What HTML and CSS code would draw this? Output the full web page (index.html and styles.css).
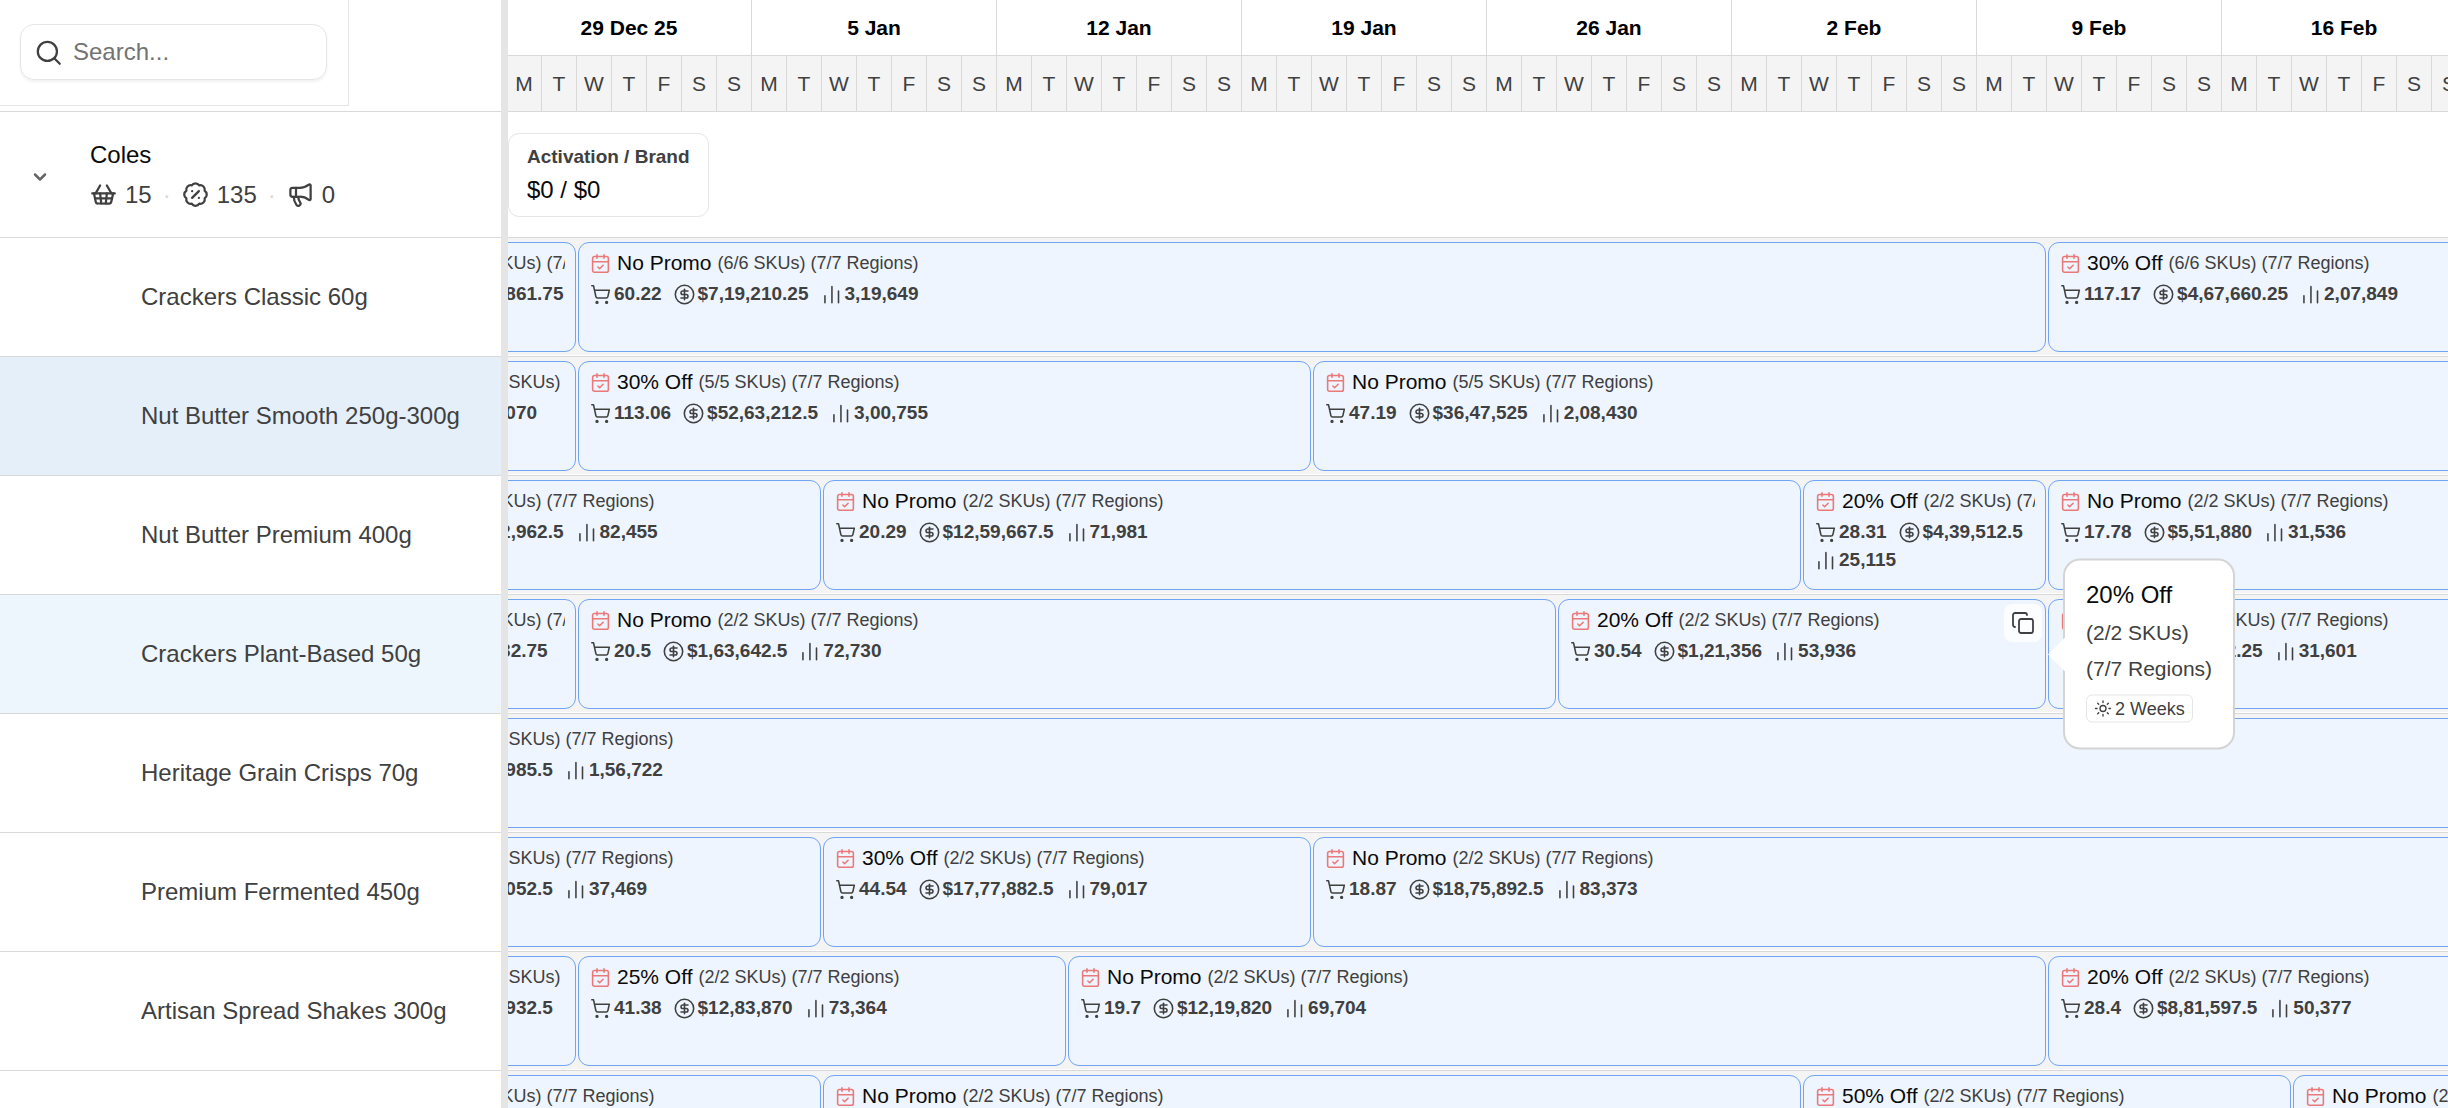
FILE: index.html
```html
<!DOCTYPE html>
<html lang="en">
<head>
    <meta charset="UTF-8">
    <meta name="viewport" content="width=device-width, initial-scale=1.0">
    <title>Promo Planner</title>
    <link rel="stylesheet" href="styles.css">
</head>
<body>

    <!-- Icon set -->
    <svg class="sprite" aria-hidden="true">
        <symbol id="search-icon" viewBox="0 0 24 24"><circle cx="11" cy="11" r="8.5"/><path d="m22 22-4.7-4.7"/></symbol>
        <symbol id="chevron" viewBox="0 0 24 24"><path d="m6 9 6 6 6-6"/></symbol>
        <symbol id="basket" viewBox="0 0 24 24"><path d="m15 11-1 9"/><path d="m19 11-4-7"/><path d="M2 11h20"/><path d="m3.5 11 1.6 7.4a2 2 0 0 0 2 1.6h9.8a2 2 0 0 0 2-1.6l1.7-7.4"/><path d="M4.5 15.5h15"/><path d="m5 11 4-7"/><path d="m9 11 1 9"/></symbol>
        <symbol id="percent" viewBox="0 0 24 24"><path d="M3.85 8.62a4 4 0 0 1 4.78-4.77 4 4 0 0 1 6.74 0 4 4 0 0 1 4.78 4.78 4 4 0 0 1 0 6.74 4 4 0 0 1-4.77 4.78 4 4 0 0 1-6.75 0 4 4 0 0 1-4.78-4.77 4 4 0 0 1 0-6.76Z"/><path d="m15 9-6 6"/><path d="M9 9h.01"/><path d="M15 15h.01"/></symbol>
        <symbol id="megaphone" viewBox="0 0 24 24"><path d="M11 6a13 13 0 0 0 8.4-2.8A1 1 0 0 1 21 4v12a1 1 0 0 1-1.6.8A13 13 0 0 0 11 14H5a2 2 0 0 1-2-2V8a2 2 0 0 1 2-2z"/><path d="M6 14a12 12 0 0 0 2.4 7.2 2 2 0 0 0 3.2-2.4A8 8 0 0 1 10 14"/><path d="M8 6v8"/></symbol>
        <symbol id="calendar" viewBox="0 0 24 24"><path d="M8 2v4"/><path d="M16 2v4"/><rect x="3" y="4" width="18" height="18" rx="2"/><path d="M3 10h18"/><path d="m9 16 2 2 4-4"/></symbol>
        <symbol id="cart" viewBox="0 0 24 24"><circle cx="8" cy="21" r="1"/><circle cx="19" cy="21" r="1"/><path d="M2.05 2.05h2l2.66 12.42a2 2 0 0 0 2 1.58h9.78a2 2 0 0 0 1.95-1.57l1.65-7.43H5.12"/></symbol>
        <symbol id="dollar" viewBox="0 0 24 24"><circle cx="12" cy="12" r="10.5"/><path d="M16 8h-6a2 2 0 1 0 0 4h4a2 2 0 1 1 0 4H8"/><path d="M12 18V6"/></symbol>
        <symbol id="chart" viewBox="0 0 24 24"><path d="M4.5 13.5v8"/><path d="M12.5 3v18.5"/><path d="M20 8v13.5"/></symbol>
        <symbol id="copy" viewBox="0 0 24 24"><rect x="8" y="8" width="14" height="14" rx="2"/><path d="M4 16c-1.1 0-2-.9-2-2V4c0-1.1.9-2 2-2h10c1.1 0 2 .9 2 2"/></symbol>
        <symbol id="sun" viewBox="0 0 24 24"><circle cx="12" cy="12" r="4"/><path d="M12 2v2"/><path d="M12 20v2"/><path d="m4.9 4.9 1.4 1.4"/><path d="m17.7 17.7 1.4 1.4"/><path d="M2 12h2"/><path d="M20 12h2"/><path d="m6.3 17.7-1.4 1.4"/><path d="m19.1 4.9-1.4 1.4"/></symbol>
    </svg>

    <div class="planner">
        <aside class="sidebar">
            <div class="sidebar-head">
                <div class="search-panel">
                    <label class="search-box">
                        <svg class="icon icon-lg"><use href="#search-icon"/></svg>
                        <input type="text" class="search-input" placeholder="Search..." aria-label="Search">
                    </label>
                </div>
            </div>

            <div class="group">
                <button type="button" class="toggle" aria-label="Collapse Coles">
                    <svg class="icon icon-sm"><use href="#chevron"/></svg>
                </button>
                <div class="group-info">
                    <div class="group-name">Coles</div>
                    <div class="group-stats">
                        <span class="stat"><svg class="icon icon-lg"><use href="#basket"/></svg>15</span>
                        <span class="dot">·</span>
                        <span class="stat"><svg class="icon icon-lg"><use href="#percent"/></svg>135</span>
                        <span class="dot">·</span>
                        <span class="stat"><svg class="icon icon-lg"><use href="#megaphone"/></svg>0</span>
                    </div>
                </div>
            </div>

            <div class="product">Crackers Classic 60g</div>
            <div class="product hovered">Nut Butter Smooth 250g-300g</div>
            <div class="product">Nut Butter Premium 400g</div>
            <div class="product selected">Crackers Plant-Based 50g</div>
            <div class="product">Heritage Grain Crisps 70g</div>
            <div class="product">Premium Fermented 450g</div>
            <div class="product">Artisan Spread Shakes 300g</div>
            <div class="product"></div>
        </aside>

        <div class="splitter"></div>

        <main class="timeline">
            <div class="weeks" id="weeks"></div>
            <div class="days" id="days"></div>
            <div class="budget-row">
                <div class="budget-card">
                    <div class="budget-title">Activation / Brand</div>
                    <div class="budget-value">$0 / $0</div>
                </div>
            </div>
            <div id="lanes"></div>
        </main>
    </div>

    <script src="script.js"></script>
</body>
</html>
```

FILE: styles.css
```css
:root {
    --day: 35px;
    --line: #d9d9d9;
    --text: #404040;
    --ink: #0a0a0a;
    --blue: #70a4f5;
    --bar: #eef5fe;
}

* {
    box-sizing: border-box;
}

body {
    margin: 0;
    background-color: #fff;
    color: var(--text);
    font-family: "Liberation Sans", Arial, sans-serif;
    font-size: 24px;
}

.sprite {
    display: none;
}

.icon {
    flex: none;
    width: 21px;
    height: 21px;
    fill: none;
    stroke: currentColor;
    stroke-width: 1.8;
    stroke-linecap: round;
    stroke-linejoin: round;
}

.icon-lg {
    width: 27px;
    height: 27px;
    stroke-width: 2;
}

.icon-sm {
    width: 20px;
    height: 20px;
    stroke-width: 3;
}

.planner {
    display: flex;
    height: 100vh;
    overflow: hidden;
}

/* Left column */
.sidebar {
    flex: 0 0 501px;
}

.sidebar-head {
    height: 112px;
    border-bottom: 1px solid var(--line);
}

.search-panel {
    width: 349px;
    height: 106px;
    padding: 24px 21px 24px 20px;
    border-right: 1px solid #e5e5e5;
    border-bottom: 1px solid #e5e5e5;
}

.search-box {
    display: flex;
    align-items: center;
    gap: 11px;
    height: 56px;
    padding: 0 14px;
    border: 1px solid #e5e5e5;
    border-radius: 14px;
    box-shadow: 0 2px 3px rgba(0, 0, 0, 0.06);
}

.search-input {
    flex: 1;
    min-width: 0;
    padding: 0;
    border: none;
    outline: none;
    background: none;
    font: inherit;
}

.search-input::placeholder {
    color: #737373;
}

.group {
    display: flex;
    align-items: center;
    height: 126px;
    padding-left: 30px;
    border-bottom: 1px solid var(--line);
}

.toggle {
    display: flex;
    width: 60px;
    padding: 4px 0 0;
    border: none;
    background: none;
    color: #666;
    cursor: pointer;
}

.group-name {
    color: var(--ink);
    line-height: 36px;
}

.group-stats {
    display: flex;
    align-items: center;
    gap: 11px;
    margin-top: 4px;
    line-height: 36px;
}

.stat {
    display: flex;
    align-items: center;
    gap: 8px;
}

.dot {
    color: #d9d9d9;
}

.product {
    display: flex;
    align-items: center;
    height: 119px;
    padding-left: 141px;
    border-bottom: 1px solid var(--line);
}

.product.hovered {
    background-color: #e4effa;
}

.product.selected {
    background-color: #edf5fd;
}

.splitter {
    flex: 0 0 7px;
    background-color: #e5e5e5;
    cursor: col-resize;
}

/* Calendar header */
.timeline {
    flex: 1;
    min-width: 0;
    overflow: hidden;
}

.weeks,
.days {
    display: flex;
    height: 56px;
    margin-left: -1px;
    border-bottom: 1px solid var(--line);
    font-size: 21px;
}

.week,
.day {
    display: flex;
    flex: none;
    align-items: center;
    justify-content: center;
    border-right: 1px solid var(--line);
}

.week {
    width: calc(var(--day) * 7);
    color: #000;
    font-weight: bold;
}

.day {
    width: var(--day);
    background-color: #f4f4f4;
}

.budget-row {
    display: flex;
    align-items: center;
    height: 126px;
    border-bottom: 1px solid var(--line);
}

.budget-card {
    padding: 9px 18px 7px;
    border: 1px solid #e5e5e5;
    border-radius: 11px;
}

.budget-title {
    font-size: 19px;
    font-weight: bold;
    line-height: 28px;
}

.budget-value {
    color: var(--ink);
    line-height: 38px;
}

/* Promo lanes, the first bars start before the visible range */
.lane {
    height: 119px;
    padding-bottom: 1px;
    border-bottom: 1px solid var(--line);
}

.lane-track {
    display: flex;
    gap: 2px;
    height: 117px;
    margin-left: -176px;
    padding: 4px 1px;
    background-color: #f4f4f4;
}

.bar {
    position: relative;
    flex: none;
    height: 110px;
    padding: 6px 10px 6px 11px;
    border: 1px solid var(--blue);
    border-radius: 11px;
    background-color: var(--bar);
}

.bar-head {
    display: flex;
    align-items: center;
    gap: 6px;
    overflow: hidden;
    line-height: 28px;
    white-space: nowrap;
}

.bar-head .icon {
    color: #ea7a7a;
}

.bar-title {
    color: var(--ink);
    font-size: 21px;
}

.bar-scope {
    font-size: 18px;
}

.metrics {
    display: flex;
    flex-wrap: wrap;
    gap: 4px 12px;
    margin-top: 5px;
}

.metric {
    display: flex;
    align-items: center;
    gap: 3px;
    font-size: 19px;
    font-weight: bold;
    line-height: 24px;
}

.copy-button {
    position: absolute;
    top: 4px;
    right: 3px;
    display: flex;
    padding: 7px;
    border: none;
    border-radius: 8px;
    background-color: #fcfdff;
    color: var(--text);
    cursor: pointer;
}

.copy-button .icon {
    width: 24px;
    height: 24px;
}

/* Hover card of a bar */
.tooltip {
    position: absolute;
    z-index: 10;
    top: 50%;
    left: 100%;
    width: 172px;
    margin-left: 18px;
    padding: 16px 0 24px 21px;
    border: 2px solid #d4d4d4;
    border-radius: 17px;
    background-color: #fff;
    white-space: nowrap;
    transform: translateY(-50%);
}

.tooltip::before {
    content: "";
    position: absolute;
    top: 50%;
    right: 100%;
    border: 17px solid transparent;
    border-left: none;
    border-right-color: #fff;
    transform: translateY(-50%);
}

.tooltip-title {
    color: var(--ink);
    line-height: 36px;
}

.tooltip-line {
    margin-top: 4px;
    font-size: 21px;
    line-height: 32px;
}

.duration {
    display: inline-flex;
    align-items: center;
    gap: 3px;
    height: 28px;
    margin-top: 10px;
    padding: 0 7px;
    border: 1px solid #e5e5e5;
    border-radius: 6px;
    font-size: 18px;
}

.duration .icon {
    width: 18px;
    height: 18px;
}
```

FILE: script.js
```js
const DAY = 35;
const weeks = ['29 Dec 25', '5 Jan', '12 Jan', '19 Jan', '26 Jan', '2 Feb', '9 Feb', '16 Feb'];
const dayLetters = ['M', 'T', 'W', 'T', 'F', 'S', 'S'];

// one array per product, every bar: days, title, SKUs, units, sales, volume
const lanes = [
    [
        [7, '20% Off', '6/6', '54.19', '$6,84,861.75'],
        [42, 'No Promo', '6/6', '60.22', '$7,19,210.25', '3,19,649'],
        [14, '30% Off', '6/6', '117.17', '$4,67,660.25', '2,07,849']
    ],
    [
        [7, 'No Promo', '5/5', '46.83', '$3,52,070'],
        [21, '30% Off', '5/5', '113.06', '$52,63,212.5', '3,00,755'],
        [35, 'No Promo', '5/5', '47.19', '$36,47,525', '2,08,430']
    ],
    [
        [14, '20% Off', '2/2', '58.14', '$14,42,962.5', '82,455'],
        [28, 'No Promo', '2/2', '20.29', '$12,59,667.5', '71,981'],
        [7, '20% Off', '2/2', '28.31', '$4,39,512.5', '25,115'],
        [14, 'No Promo', '2/2', '17.78', '$5,51,880', '31,536']
    ],
    [
        [7, '20% Off', '2/2', '19.37', '$98,132.75'],
        [28, 'No Promo', '2/2', '20.5', '$1,63,642.5', '72,730'],
        [14, '20% Off', '2/2', '30.54', '$1,21,356', '53,936', '2 Weeks'],
        [14, 'No Promo', '2/2', '18.26', '$83,912.25', '31,601']
    ],
    [
        [63, 'No Promo', '2/2', '55.02', '$8,64,985.5', '1,56,722']
    ],
    [
        [14, 'No Promo', '2/2', '18.65', '$8,43,052.5', '37,469'],
        [14, '30% Off', '2/2', '44.54', '$17,77,882.5', '79,017'],
        [35, 'No Promo', '2/2', '18.87', '$18,75,892.5', '83,373']
    ],
    [
        [7, 'No Promo', '2/2', '19.42', '$9,21,932.5'],
        [14, '25% Off', '2/2', '41.38', '$12,83,870', '73,364'],
        [28, 'No Promo', '2/2', '19.7', '$12,19,820', '69,704'],
        [14, '20% Off', '2/2', '28.4', '$8,81,597.5', '50,377']
    ],
    [
        [14, '20% Off', '2/2'],
        [28, 'No Promo', '2/2'],
        [14, '50% Off', '2/2'],
        [14, 'No Promo', '2/2']
    ]
];

function icon(name) {
    return `<svg class="icon"><use href="#${name}"/></svg>`;
}

function metric(name, value) {
    return value ? `<span class="metric">${icon(name)}${value}</span>` : '';
}

function hoverCard(title, skus, duration) {
    return `
        <button type="button" class="copy-button" aria-label="Copy promo">${icon('copy')}</button>
        <div class="tooltip" role="tooltip">
            <div class="tooltip-title">${title}</div>
            <div class="tooltip-line">(${skus} SKUs)</div>
            <div class="tooltip-line">(7/7 Regions)</div>
            <div class="duration">${icon('sun')}${duration}</div>
        </div>`;
}

function bar([days, title, skus, units, sales, volume, duration]) {
    return `
        <div class="bar" style="width: ${days * DAY - 2}px">
            <div class="bar-head">
                ${icon('calendar')}
                <span class="bar-title">${title}</span>
                <span class="bar-scope">(${skus} SKUs) (7/7 Regions)</span>
            </div>
            <div class="metrics">
                ${metric('cart', units)}${metric('dollar', sales)}${metric('chart', volume)}
            </div>
            ${duration ? hoverCard(title, skus, duration) : ''}
        </div>`;
}

document.getElementById('weeks').innerHTML =
    weeks.map(week => `<div class="week">${week}</div>`).join('');

document.getElementById('days').innerHTML =
    weeks.map(() => dayLetters.map(day => `<div class="day">${day}</div>`).join('')).join('');

document.getElementById('lanes').innerHTML =
    lanes.map(bars => `<div class="lane"><div class="lane-track">${bars.map(bar).join('')}</div></div>`).join('');
```
